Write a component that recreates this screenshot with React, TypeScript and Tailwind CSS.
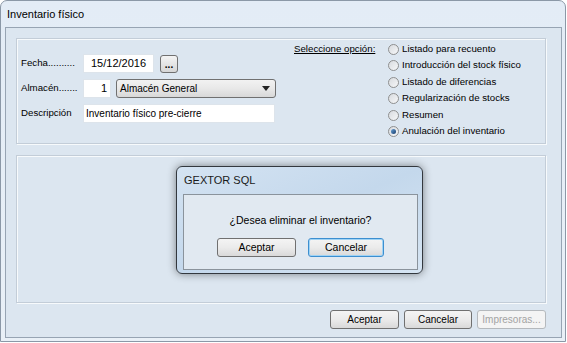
import React from "react";

const options = [
  "Listado para recuento",
  "Introducción del stock físico",
  "Listado de diferencias",
  "Regularización de stocks",
  "Resumen",
  "Anulación del inventario",
];

function Radio({ checked }: { checked?: boolean }) {
  return (
    <span className="w-[11px] h-[11px] rounded-full border border-[#8e8f8f] bg-gradient-to-br from-[#d8dbdf] to-[#f6f7f8] flex items-center justify-center shrink-0">
      {checked && <span className="w-[5px] h-[5px] rounded-full bg-gradient-to-br from-[#6aa3d8] to-[#183d6d]"></span>}
    </span>
  );
}

function Btn({ label, w, focus, disabled }: { label: string; w: string; focus?: boolean; disabled?: boolean }) {
  return (
    <div
      className={`${w} h-[19px] rounded-[3px] border flex items-center justify-center bg-gradient-to-b from-[#f4f4f4] via-[#ebebeb] to-[#d9d9d9] ${
        focus ? "border-[#3c8fd0] shadow-[inset_0_0_0_1px_#9fd3f5]" : disabled ? "border-[#b5b9bd] from-[#f4f4f4] to-[#f4f4f4] via-[#f4f4f4]" : "border-[#707070]"
      } ${disabled ? "text-[#a3a3a3]" : "text-black"}`}
    >
      {label}
    </div>
  );
}

export default function App() {
  return (
    <div className="w-[567px] h-[343px] bg-white overflow-hidden font-['Liberation_Sans',Arial,sans-serif] text-[9.7px] text-black">
      {/* Window frame */}
      <div className="relative w-[566px] h-[342px] rounded-t-[7px] border border-[#8b98a7] bg-gradient-to-b from-[#e3ecf6] to-[#e9f0f7] pl-[4px] flex flex-col">
        {/* Title bar */}
        <div className="h-[26px] flex items-center pl-[2px] text-[11px] leading-none">Inventario físico</div>

        {/* Client area */}
        <div className="w-[557px] h-[311px] border border-[#97a4b3] bg-[#dce6f0] flex flex-col pt-[10px] pl-[10px]">
          {/* Top group */}
          <div className="w-[530px] h-[106px] border border-[#c3cdd8] shadow-[inset_1px_1px_0_#f7fafc,1px_1px_0_#f7fafc] flex">
            <div className="w-[271px] flex flex-col gap-[6px] pt-[15px] pl-[4px]">
              <div className="flex items-center h-[19px]">
                <span className="w-[62px]">Fecha..........</span>
                <div className="w-[71px] h-[19px] bg-white border border-[#dde4eb] flex items-center pl-[7px] text-[11px]">15/12/2016</div>
                <div className="ml-[6px] w-[18px] h-[18px] rounded-[3px] border border-[#707070] bg-gradient-to-b from-[#f4f4f4] to-[#d6d6d6] flex items-end justify-center pb-[2px] text-[10px] leading-none font-bold">...</div>
              </div>
              <div className="flex items-center h-[19px]">
                <span className="w-[62px]">Almacén.......</span>
                <div className="w-[28px] h-[19px] bg-white border border-[#dde4eb] flex items-center justify-end pr-[3px] text-[11px]">1</div>
                <div className="ml-[5px] w-[160px] h-[19px] rounded-[3px] border border-[#707070] bg-gradient-to-b from-[#f2f2f2] via-[#e8e8e8] to-[#d8d8d8] flex items-center pl-[3px] pr-[5px] justify-between text-[10px]">
                  <span>Almacén General</span>
                  <svg width="8" height="5" viewBox="0 0 8 5"><path d="M0 0h8L4 5z" fill="#222" /></svg>
                </div>
              </div>
              <div className="flex items-center h-[19px]">
                <span className="w-[62px]">Descripción</span>
                <div className="w-[192px] h-[19px] bg-white border border-[#dde4eb] flex items-center pl-[2px] text-[10px]">Inventario físico pre-cierre</div>
              </div>
            </div>
            <div className="flex pt-[2px] pl-[6px]">
              <span className="h-[16.5px] flex items-center underline w-[94px]">Seleccione opción:</span>
              <div className="flex flex-col">
                {options.map((o, i) => (
                  <div key={o} className="h-[16.5px] flex items-center gap-[3px]">
                    <Radio checked={i === options.length - 1} />
                    <span>{o}</span>
                  </div>
                ))}
              </div>
            </div>
          </div>

          {/* Bottom group */}
          <div className="mt-[11px] w-[530px] h-[148px] border border-[#c3cdd8] shadow-[inset_1px_1px_0_#f7fafc,1px_1px_0_#f7fafc]"></div>

          {/* Buttons */}
          <div className="mt-[7px] w-[530px] flex justify-end gap-[5px] text-[10px]">
            <Btn label="Aceptar" w="w-[69px]" />
            <Btn label="Cancelar" w="w-[68px]" />
            <Btn label="Impresoras..." w="w-[69px]" disabled />
          </div>
        </div>

        {/* Message dialog */}
        <div className="absolute left-[175px] top-[165px] w-[247px] h-[108px] rounded-[6px] border border-[#33383e] bg-gradient-to-br from-[#d4e3f2] via-[#c4d8ec] to-[#d6e5f3] shadow-[0_0_8px_rgba(0,0,0,0.45)] flex flex-col pl-[6px] pr-[4px]">
          <div className="h-[27px] flex items-center pl-[1px] text-[11px] leading-none text-[#1a1a1a]">GEXTOR SQL</div>
          <div className="h-[76px] border border-[#8a939c] bg-[#e1e9f1] flex flex-col items-center">
            <div className="mt-[19px] h-[14px] flex items-center text-[10.5px]">¿Desea eliminar el inventario?</div>
            <div className="mt-[10px] flex gap-[12px] text-[10.5px]">
              <Btn label="Aceptar" w="w-[79px]" />
              <Btn label="Cancelar" w="w-[76px]" focus />
            </div>
          </div>
        </div>
      </div>
    </div>
  );
}
